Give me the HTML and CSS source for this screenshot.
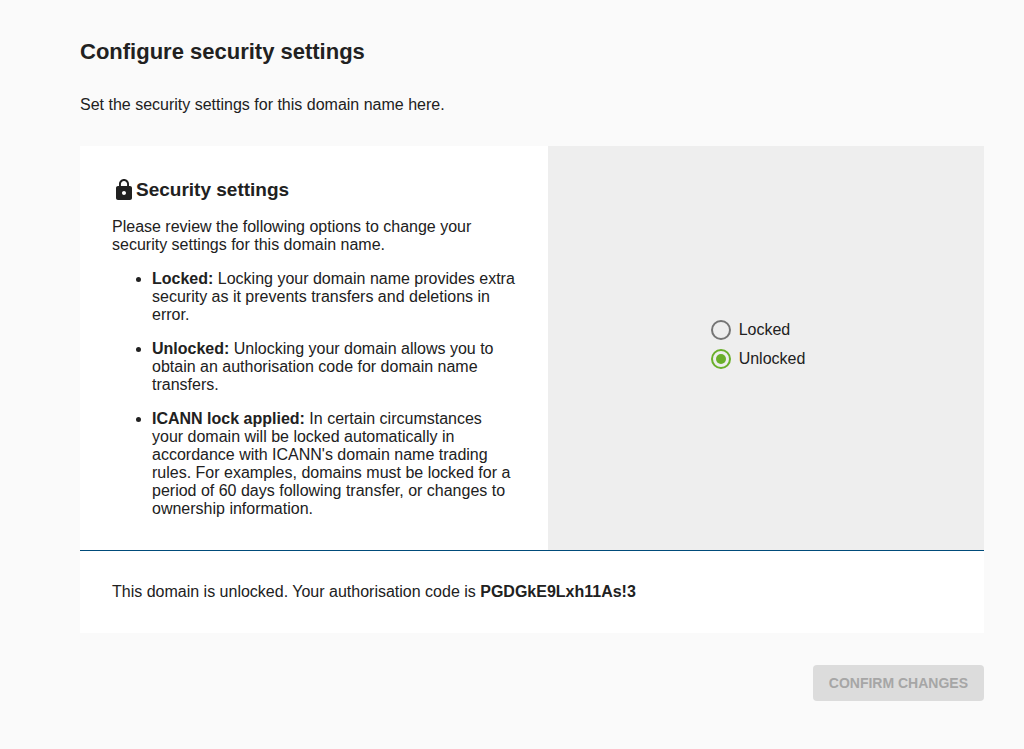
FILE: index.html
```html
<!DOCTYPE html>
<html lang="en">
<head>
<meta charset="utf-8">
<title>Configure security settings</title>
<link rel="stylesheet" href="styles.css">
</head>
<body>
<main class="page">
  <h1 class="page-title">Configure security settings</h1>
  <p class="intro">Set the security settings for this domain name here.</p>
  <form class="form">
    <section class="card">
      <div class="card-main">
        <div class="details">
          <h2 class="card-title">
            <svg class="lock" viewBox="0 0 24 24" aria-hidden="true"><path fill="currentColor" d="M18 8h-1V6c0-2.760-2.240-5-5-5S7 3.240 7 6v2H6c-1.100 0-2 .9-2 2v10c0 1.100.9 2 2 2h12c1.100 0 2-.9 2-2V10c0-1.100-.9-2-2-2zm-6 9c-1.100 0-2-.9-2-2s.9-2 2-2 2 .9 2 2-.9 2-2 2zm3.100-9H8.900V6c0-1.710 1.390-3.100 3.100-3.100 1.710 0 3.100 1.390 3.100 3.100v2z"/></svg>
            Security settings
          </h2>
          <p class="text">Please review the following options to change your security settings for this domain name.</p>
          <ul class="options">
            <li><strong>Locked:</strong> Locking your domain name provides extra security as it prevents transfers and deletions in error.</li>
            <li><strong>Unlocked:</strong> Unlocking your domain allows you to obtain an authorisation code for domain name transfers.</li>
            <li><strong>ICANN lock applied:</strong> In certain circumstances your domain will be locked automatically in accordance with ICANN's domain name trading rules. For examples, domains must be locked for a period of 60 days following transfer, or changes to ownership information.</li>
          </ul>
        </div>
        <div class="choices">
          <div class="radio-group" role="radiogroup" aria-label="Domain lock">
            <label class="choice"><input class="radio" type="radio" name="lock" value="locked">Locked</label>
            <label class="choice"><input class="radio" type="radio" name="lock" value="unlocked" checked>Unlocked</label>
          </div>
        </div>
      </div>
      <p class="status">This domain is unlocked. Your authorisation code is <strong>PGDGkE9Lxh11As!3</strong></p>
    </section>
    <div class="actions"><button class="confirm" type="submit" disabled>CONFIRM CHANGES</button></div>
  </form>
</main>
</body>
</html>
```
FILE: styles.css
```css
body {
  margin: 0;
  background: #fafafa;
  color: #212121;
  font: 16px/18px "Liberation Sans", Arial, sans-serif;
}

.page {
  padding: 36px 40px 48px 80px;
}

.page-title {
  margin: 0;
  font-size: 22px;
  line-height: 32px;
}

.intro {
  margin: 28px 0 32px;
}

.card {
  background: #fff;
}

.card-main {
  display: grid;
  grid-template-columns: 468fr 436fr;
  border-bottom: 1px solid #004b7a;
}

.details {
  padding: 32px;
}

.card-title {
  display: flex;
  align-items: center;
  margin: 0 0 16px;
  font-size: 19px;
  line-height: 24px;
}

.lock {
  width: 24px;
  height: 24px;
}

.text {
  margin: 0;
}

.options {
  margin: 16px 0 0;
  padding-left: 40px;
}

.options li + li {
  margin-top: 16px;
}

.choices {
  display: flex;
  align-items: center;
  justify-content: center;
  background: #eee;
}

.radio-group {
  display: grid;
  gap: 9px;
  padding: 0 16px 8px 0;
}

.choice {
  display: flex;
  align-items: center;
  gap: 8px;
  line-height: 20px;
}

.radio {
  appearance: none;
  display: grid;
  place-items: center;
  box-sizing: border-box;
  width: 20px;
  height: 20px;
  margin: 0;
  border: 2px solid #757575;
  border-radius: 50%;
}

.radio:checked {
  border-color: #6aaf2a;
}

.radio:checked::before {
  content: "";
  width: 10px;
  height: 10px;
  border-radius: 50%;
  background: #6aaf2a;
}

.status {
  margin: 0;
  padding: 32px;
}

.actions {
  display: flex;
  justify-content: flex-end;
  margin-top: 32px;
}

.confirm {
  padding: 0 16px;
  border: 0;
  border-radius: 4px;
  background: #dcdcdc;
  color: #a6a6a6;
  font: bold 14px/36px "Liberation Sans", Arial, sans-serif;
}
```
